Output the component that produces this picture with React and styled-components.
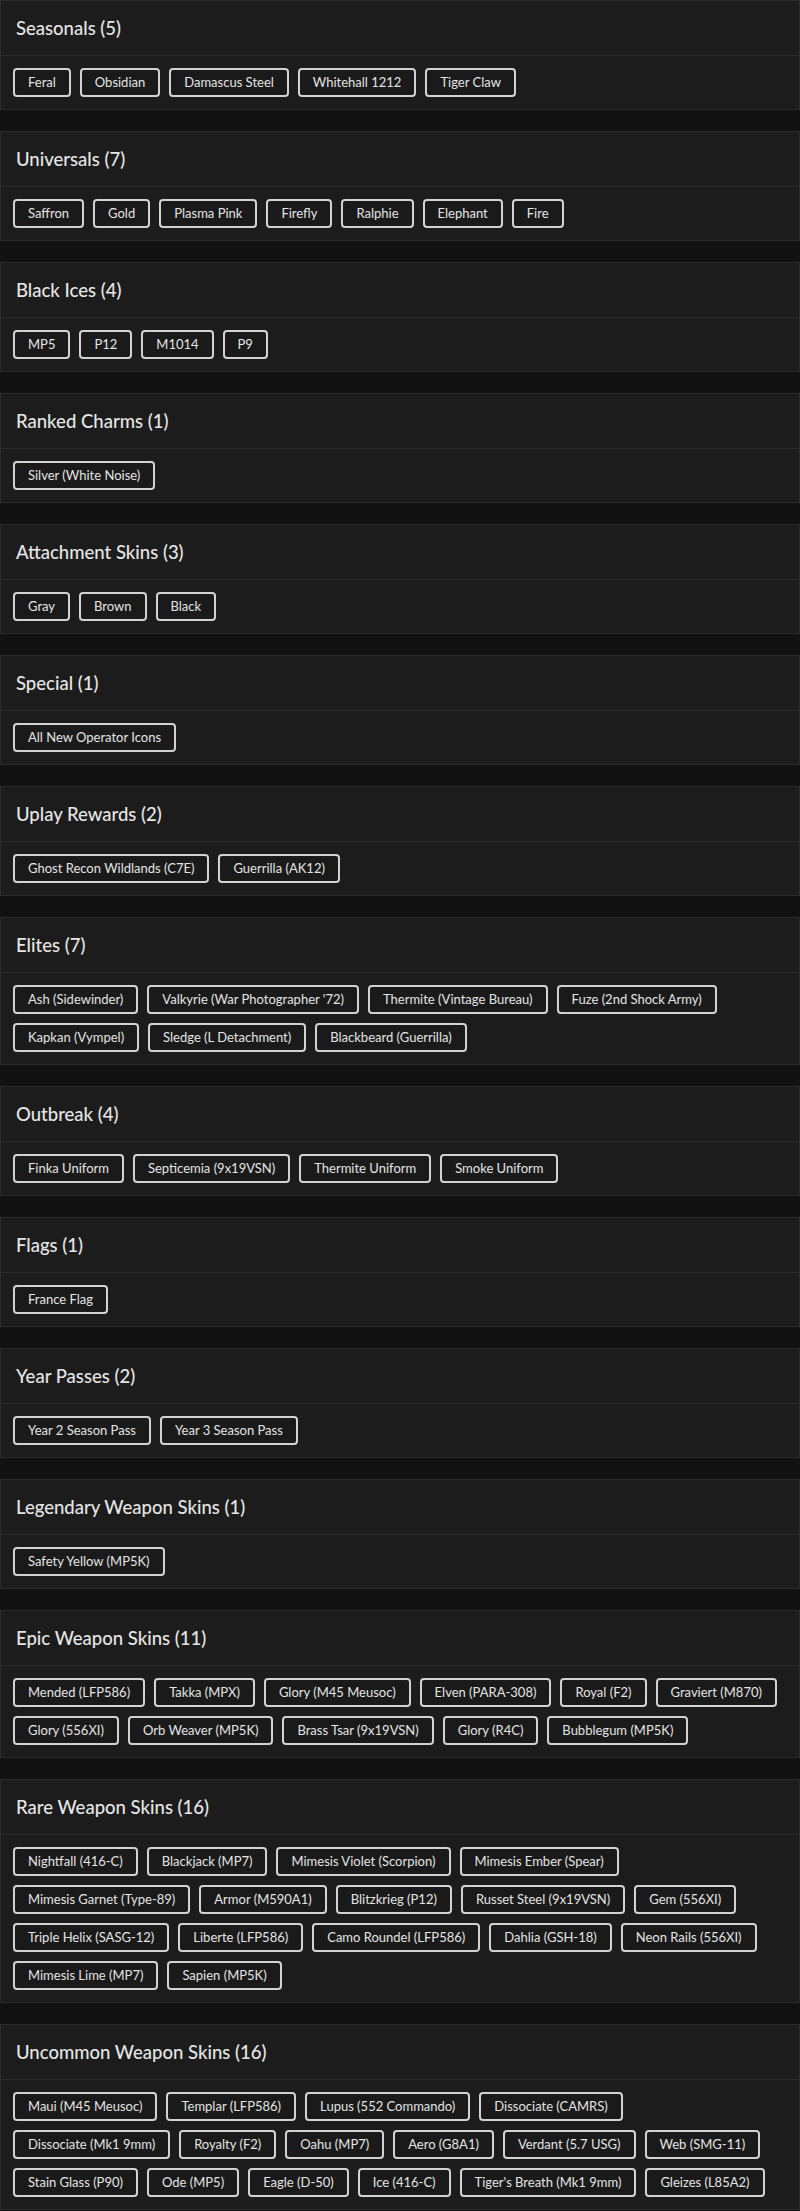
import React from 'react';
import styled, { createGlobalStyle } from 'styled-components';

const GlobalStyle = createGlobalStyle`
  html, body {
    margin: 0;
    padding: 0;
    background: #121212;
  }
  body {
    font-family: Lato, "Noto Sans", sans-serif;
    color: #e4e4e4;
  }
`;

const Page = styled.div`
  display: flex;
  flex-direction: column;
  gap: 21px;
  width: 800px;
`;

const Card = styled.section`
  background: #1c1c1c;
  border: 1px solid #2c2c2c;
`;

const CardHeader = styled.div`
  display: flex;
  align-items: center;
  height: 54px;
  padding: 0 15px;
  border-bottom: 1px solid #2c2c2c;
  font-size: 18.5px;
  font-weight: 500;
  color: #e6e6e6;
`;

const CardBody = styled.div`
  display: flex;
  flex-wrap: wrap;
  gap: 9px;
  padding: 12px;
`;

const Chip = styled.button`
  font-family: inherit;
  font-size: 13px;
  line-height: 17px;
  padding: 4px 13px;
  background: #1a1a1a;
  color: #e4e4e4;
  border: 2px solid #d2d2d2;
  border-radius: 4px;
  white-space: nowrap;
  cursor: pointer;
`;

const groups = [
  { name: 'Seasonals', items: ['Feral', 'Obsidian', 'Damascus Steel', 'Whitehall 1212', 'Tiger Claw'] },
  { name: 'Universals', items: ['Saffron', 'Gold', 'Plasma Pink', 'Firefly', 'Ralphie', 'Elephant', 'Fire'] },
  { name: 'Black Ices', items: ['MP5', 'P12', 'M1014', 'P9'] },
  { name: 'Ranked Charms', items: ['Silver (White Noise)'] },
  { name: 'Attachment Skins', items: ['Gray', 'Brown', 'Black'] },
  { name: 'Special', items: ['All New Operator Icons'] },
  { name: 'Uplay Rewards', items: ['Ghost Recon Wildlands (C7E)', 'Guerrilla (AK12)'] },
  {
    name: 'Elites',
    items: [
      'Ash (Sidewinder)',
      "Valkyrie (War Photographer '72)",
      'Thermite (Vintage Bureau)',
      'Fuze (2nd Shock Army)',
      'Kapkan (Vympel)',
      'Sledge (L Detachment)',
      'Blackbeard (Guerrilla)'
    ]
  },
  { name: 'Outbreak', items: ['Finka Uniform', 'Septicemia (9x19VSN)', 'Thermite Uniform', 'Smoke Uniform'] },
  { name: 'Flags', items: ['France Flag'] },
  { name: 'Year Passes', items: ['Year 2 Season Pass', 'Year 3 Season Pass'] },
  { name: 'Legendary Weapon Skins', items: ['Safety Yellow (MP5K)'] },
  {
    name: 'Epic Weapon Skins',
    items: [
      'Mended (LFP586)',
      'Takka (MPX)',
      'Glory (M45 Meusoc)',
      'Elven (PARA-308)',
      'Royal (F2)',
      'Graviert (M870)',
      'Glory (556XI)',
      'Orb Weaver (MP5K)',
      'Brass Tsar (9x19VSN)',
      'Glory (R4C)',
      'Bubblegum (MP5K)'
    ]
  },
  {
    name: 'Rare Weapon Skins',
    items: [
      'Nightfall (416-C)',
      'Blackjack (MP7)',
      'Mimesis Violet (Scorpion)',
      'Mimesis Ember (Spear)',
      'Mimesis Garnet (Type-89)',
      'Armor (M590A1)',
      'Blitzkrieg (P12)',
      'Russet Steel (9x19VSN)',
      'Gem (556XI)',
      'Triple Helix (SASG-12)',
      'Liberte (LFP586)',
      'Camo Roundel (LFP586)',
      'Dahlia (GSH-18)',
      'Neon Rails (556XI)',
      'Mimesis Lime (MP7)',
      'Sapien (MP5K)'
    ]
  },
  {
    name: 'Uncommon Weapon Skins',
    items: [
      'Maui (M45 Meusoc)',
      'Templar (LFP586)',
      'Lupus (552 Commando)',
      'Dissociate (CAMRS)',
      'Dissociate (Mk1 9mm)',
      'Royalty (F2)',
      'Oahu (MP7)',
      'Aero (G8A1)',
      'Verdant (5.7 USG)',
      'Web (SMG-11)',
      'Stain Glass (P90)',
      'Ode (MP5)',
      'Eagle (D-50)',
      'Ice (416-C)',
      "Tiger's Breath (Mk1 9mm)",
      'Gleizes (L85A2)'
    ]
  }
];

export default function App() {
  return (
    <>
      <GlobalStyle />
      <Page>
        {groups.map(group => (
          <Card key={group.name}>
            <CardHeader>
              {group.name} ({group.items.length})
            </CardHeader>
            <CardBody>
              {group.items.map(item => (
                <Chip key={item}>{item}</Chip>
              ))}
            </CardBody>
          </Card>
        ))}
      </Page>
    </>
  );
}
